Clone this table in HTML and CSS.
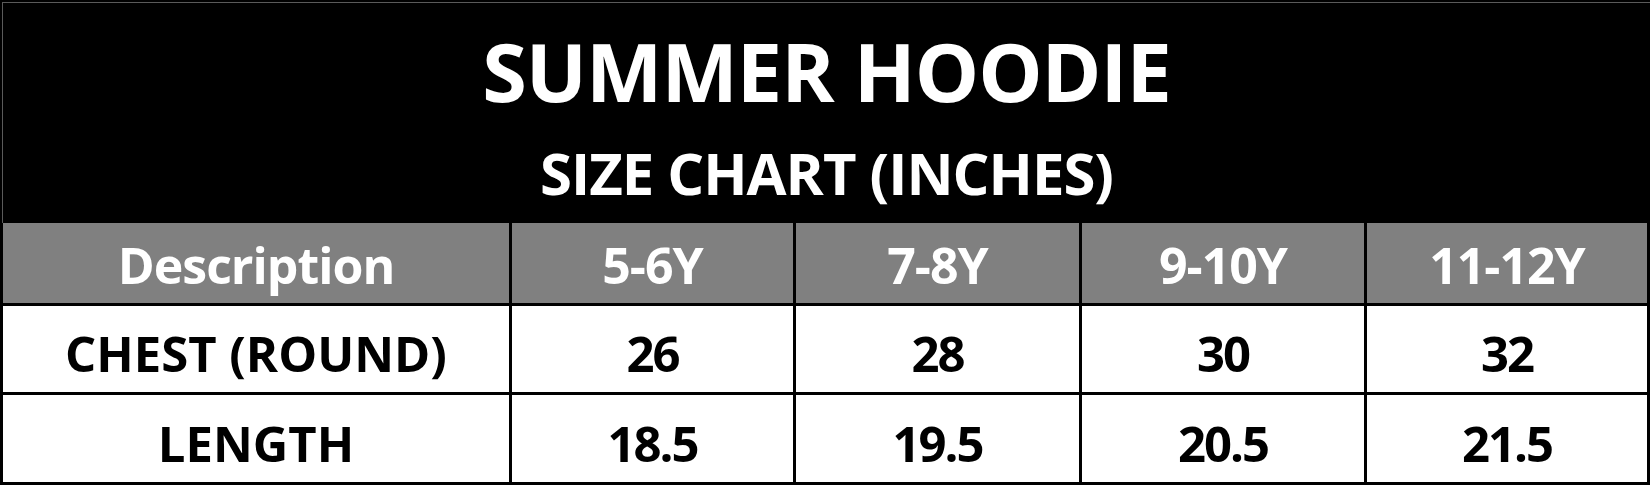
FILE: index.html
```html
<!DOCTYPE html>
<html>
<head>
<meta charset="utf-8">
<link rel="stylesheet" href="styles.css">
</head>
<body>
<div class="sheet">
  <div class="banner">
    <h1 class="title">SUMMER HOODIE</h1>
    <h2 class="subtitle">SIZE CHART (INCHES)</h2>
  </div>
  <div class="chart">
    <div class="cell head">Description</div>
    <div class="cell head">5-6Y</div>
    <div class="cell head">7-8Y</div>
    <div class="cell head">9-10Y</div>
    <div class="cell head">11-12Y</div>

    <div class="cell label">CHEST (ROUND)</div>
    <div class="cell num">26</div>
    <div class="cell num">28</div>
    <div class="cell num">30</div>
    <div class="cell num">32</div>

    <div class="cell label">LENGTH</div>
    <div class="cell num">18.5</div>
    <div class="cell num">19.5</div>
    <div class="cell num">20.5</div>
    <div class="cell num">21.5</div>
  </div>
</div>
</body>
</html>
```
FILE: styles.css
```css
html, body {
  margin: 0;
  padding: 0;
  background: #000;
}
.sheet {
  width: 1650px;
  height: 485px;
  background: #000;
  font-family: "Open Sans", "Liberation Sans", sans-serif;
  font-weight: 700;
  overflow: hidden;
}
.banner {
  height: 221px;
  margin: 2px 0 0 2px;
  border-top: 1px solid #5a5a5a;
  border-left: 1px solid #5a5a5a;
  background: #000;
  color: #fff;
  display: flex;
  flex-direction: column;
  align-items: center;
  box-sizing: border-box;
}
.title {
  margin: 18px 0 0 0;
  font-size: 81px;
  line-height: 100px;
  font-weight: 700;
  letter-spacing: -1px;
}
.subtitle {
  margin: 17px 0 0 0;
  font-size: 58px;
  line-height: 70px;
  font-weight: 700;
  letter-spacing: -1px;
}
.chart {
  display: grid;
  grid-template-columns: 506px 281px 283px 282px 280px;
  grid-template-rows: 80px 86px 87px;
  column-gap: 3px;
  row-gap: 3px;
  padding: 0 3px 3px 3px;
  background: #000;
}
.cell {
  display: flex;
  align-items: center;
  justify-content: center;
  font-weight: 700;
  white-space: nowrap;
}
.head {
  background: #808080;
  color: #fff;
  font-size: 50px;
  letter-spacing: -1px;
  padding-top: 4px;
}
.label, .num {
  background: #fff;
  color: #000;
  font-size: 49px;
  padding-top: 8px;
}
.num {
  letter-spacing: -2px;
}
```
